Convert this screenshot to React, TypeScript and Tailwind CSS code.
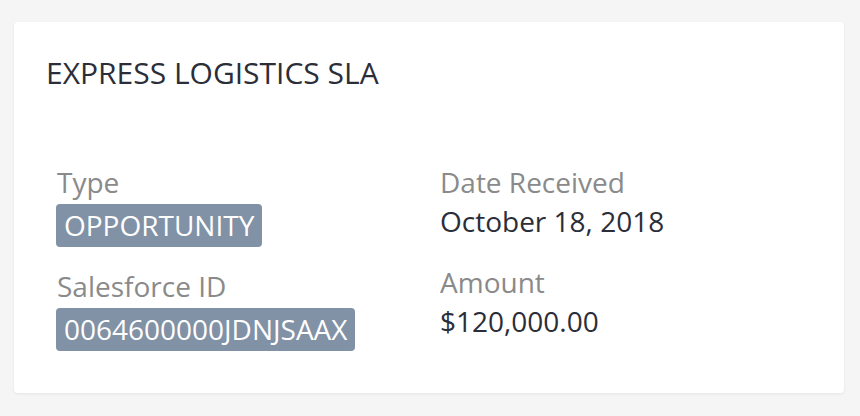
import React from "react"

const left = [
  { label: "Type", value: "OPPORTUNITY" },
  { label: "Salesforce ID", value: "0064600000JDNJSAAX" },
]

const right = [
  { label: "Date Received", value: "October 18, 2018" },
  { label: "Amount", value: "$120,000.00" },
]

export default function App() {
  return (
    <div className="min-h-[416px] w-[860px] bg-[#f5f5f5] pt-[22px] pl-[14px] font-['Open_Sans',sans-serif]">
      <div className="w-[830px] h-[371px] rounded-[4px] bg-white shadow-[0_1px_3px_rgba(0,0,0,0.07)] pl-[30px] pt-[30px]">
        <h1 className="pl-[2px] text-[30px] leading-[41px] font-normal text-[#2b2e38]">
          EXPRESS LOGISTICS SLA
        </h1>
        {/* Details */}
        <div className="flex ml-[12px] mt-[70px] text-[28px]">
          <div className="flex flex-col w-[384px] gap-[20px]">
            {left.map((f) => (
              <div key={f.label} className="flex flex-col items-start">
                <span className="pl-[1px] leading-[38px] text-[#8a8a8a]">{f.label}</span>
                <span className="mt-[3px] rounded-[4px] bg-[#8191a6] px-[8px] pt-[2px] pb-[3px] leading-[38px] text-white">
                  {f.value}
                </span>
              </div>
            ))}
          </div>
          <div className="flex flex-col gap-[22px]">
            {right.map((f) => (
              <div key={f.label} className="flex flex-col">
                <span className="leading-[38px] text-[#8a8a8a]">{f.label}</span>
                <span className="leading-[40px] text-[#2b2e38]">{f.value}</span>
              </div>
            ))}
          </div>
        </div>
      </div>
    </div>
  )
}
